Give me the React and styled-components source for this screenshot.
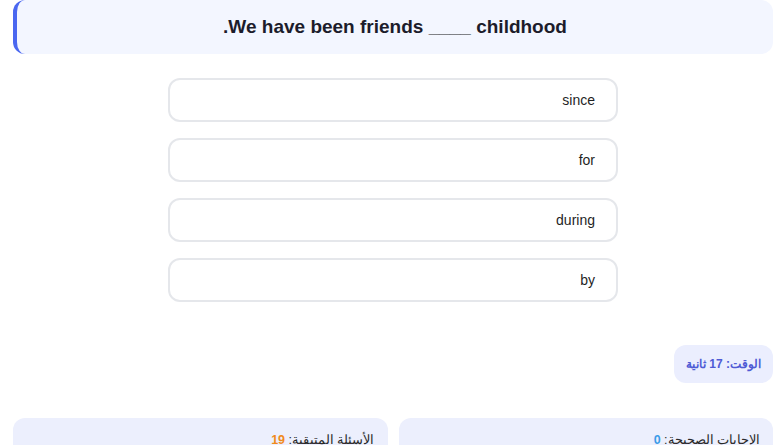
import React from 'react';
import styled, { createGlobalStyle } from 'styled-components';

const GlobalStyle = createGlobalStyle`
  body {
    margin: 0;
    background: #ffffff;
    font-family: "Liberation Sans", Arial, sans-serif;
    overflow: hidden;
  }
`;

const Page = styled.div`
  direction: rtl;
  width: 760px;
  margin-left: 13px;
  display: flex;
  flex-direction: column;
`;

const Question = styled.div`
  height: 54px;
  box-sizing: border-box;
  background: #f3f6ff;
  border-left: 4px solid #4a67f0;
  border-radius: 12px;
  display: flex;
  align-items: center;
  justify-content: center;
  font-size: 19px;
  font-weight: bold;
  color: #1c1c2b;
`;

const Options = styled.div`
  display: flex;
  flex-direction: column;
  align-items: center;
  gap: 16px;
  margin-top: 24px;
`;

const Option = styled.button`
  direction: rtl;
  width: 450px;
  height: 44px;
  box-sizing: border-box;
  background: #ffffff;
  border: 2px solid #e5e7eb;
  border-radius: 12px;
  padding: 0 21px;
  text-align: right;
  font-family: "Liberation Sans", Arial, sans-serif;
  font-size: 14px;
  color: #1f1f1f;
  cursor: pointer;
`;

const TimerRow = styled.div`
  display: flex;
  justify-content: flex-start;
  margin-top: 43px;
`;

const Timer = styled.div`
  height: 38px;
  box-sizing: border-box;
  padding: 0 12px;
  display: flex;
  align-items: center;
  background: #ebeefe;
  border-radius: 12px;
  color: #4f5bd5;
  font-size: 12px;
  font-weight: bold;
`;

const Stats = styled.div`
  display: grid;
  grid-template-columns: 1fr 1fr;
  gap: 11px;
  margin-top: 35px;
`;

const Stat = styled.div`
  height: 60px;
  background: #eceffd;
  border-radius: 12px;
  padding: 14px 13px 0;
  box-sizing: border-box;
  font-size: 12.5px;
  color: #2a2a2a;
`;

const Value = styled.span`
  font-weight: bold;
  color: ${(p) => p.$color};
`;

export default function App() {
  const options = ['since', 'for', 'during', 'by'];
  return (
    <>
      <GlobalStyle />
      <Page>
        <Question>We have been friends ____ childhood.</Question>
        <Options>
          {options.map((o) => (
            <Option key={o}>{o}</Option>
          ))}
        </Options>
        <TimerRow>
          <Timer>الوقت: 17 ثانية</Timer>
        </TimerRow>
        <Stats>
          <Stat>
            الإجابات الصحيحة: <Value $color="#3b9be8">0</Value>
          </Stat>
          <Stat>
            الأسئلة المتبقية: <Value $color="#f08a1c">19</Value>
          </Stat>
        </Stats>
      </Page>
    </>
  );
}
